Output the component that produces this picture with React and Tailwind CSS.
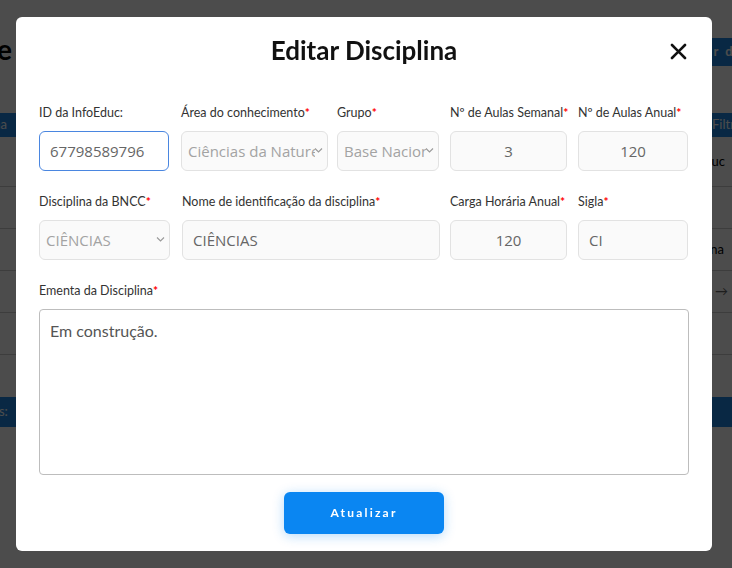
import { useState } from "react";

const fieldBase =
  "h-10 w-full rounded-md border px-[10px] text-[15px] text-[#666] outline-none font-['Open_Sans',sans-serif]";
const fieldIdle = `${fieldBase} border-[#e2e2e2] bg-[#fafafa]`;

const Label = ({ children, required }) => (
  <label className="block h-4 mb-[10px] text-[12.5px] leading-4 text-[#333] whitespace-nowrap">
    {children}
    {required && <span className="text-[#f00] text-[12px] font-bold">*</span>}
  </label>
);

const Select = ({ value }) => (
  <div className="relative">
    <select
      disabled
      value={value}
      onChange={() => {}}
      className={`${fieldIdle} appearance-none pl-[6px] pr-[12px] text-[#a3a3a3]`}
    >
      <option value={value}>{value}</option>
    </select>
    <svg
      className="absolute right-[5px] top-[17px] pointer-events-none"
      width="9"
      height="5"
      viewBox="0 0 9 5"
      fill="none"
      stroke="#999"
      strokeWidth="1.1"
    >
      <path d="M1 0.5l3.5 3.5 3.5-3.5" />
    </svg>
  </div>
);

const Fundo = () => (
  <div className="min-h-screen w-[732px] overflow-hidden bg-white font-['Lato',sans-serif]">
    <div className="flex items-start justify-between pt-[28px]">
      <h1 className="-ml-[19px] text-[28px] font-bold text-black whitespace-nowrap">de Disciplinas</h1>
      <button className="mt-[10px] -mr-[87px] h-[28px] px-5 rounded bg-[#1e88e5] text-white text-[13px] font-bold tracking-[2px] whitespace-nowrap">
        Adicionar disciplina
      </button>
    </div>
    <div className="mt-[43px] h-[24px] bg-[#1e88e5] flex items-center justify-between text-white text-[13px]">
      <span className="-ml-[48px]">Disciplina</span>
      <span className="-mr-[14px]">Filtrar</span>
    </div>
    <div className="text-[13px] text-black">
      <div className="h-[50px] border-b border-[#ccc] flex items-center justify-end">
        <span className="mr-[7px]">InfoEduc</span>
      </div>
      <div className="h-[42px] border-b border-[#ccc]" />
      <div className="h-[42px] border-b border-[#ccc] flex items-center justify-end">
        <span className="mr-[8px]">Disciplina</span>
      </div>
      <div className="h-[42px] border-b border-[#ccc] flex items-center justify-end">
        <span className="mr-[4px] text-[#666]">→</span>
      </div>
      <div className="h-[42px] border-b border-[#ccc]" />
    </div>
    <div className="mt-[42px] h-[30px] bg-[#1e88e5] flex items-center text-white text-[13px]">
      <span className="-ml-[102px] whitespace-nowrap">Total de disciplinas:</span>
    </div>
  </div>
);

export default function App() {
  const [id, setId] = useState("67798589796");
  const [nome, setNome] = useState("CIÊNCIAS");
  const [semanal, setSemanal] = useState("3");
  const [anual, setAnual] = useState("120");
  const [carga, setCarga] = useState("120");
  const [sigla, setSigla] = useState("CI");
  const [ementa, setEmenta] = useState("Em construção.");

  return (
    <div className="relative min-h-screen overflow-hidden font-['Lato',sans-serif]">
      <Fundo />

      {/* Modal */}
      <div className="fixed inset-0 bg-black/70 flex justify-start items-start pt-[17px] pl-[16px]">
        <div className="w-[696px] rounded-md bg-white px-[23px] pb-[17px]">
          <div className="relative h-[66px] flex items-center justify-center">
            <h2 className="text-[26px] font-bold text-[#111] mt-[1px]">Editar Disciplina</h2>
            <button className="absolute right-[2px] top-[26px]" aria-label="Fechar">
              <svg width="17" height="17" viewBox="0 0 17 17" stroke="#111" strokeWidth="2.6" strokeLinecap="round">
                <path d="M2 2l13 13M15 2L2 15" />
              </svg>
            </button>
          </div>

          <div className="pt-[22px]">
            {/* Linha 1 */}
            <div className="flex">
              <div className="w-[130px]">
                <Label>ID da InfoEduc:</Label>
                <input
                  value={id}
                  onChange={(e) => setId(e.target.value)}
                  className={`${fieldBase} bg-white border-[#4a86e0]`}
                />
              </div>
              <div className="w-[147px] ml-[12px]">
                <Label required>Área do conhecimento</Label>
                <Select value="Ciências da Natureza" />
              </div>
              <div className="w-[102px] ml-[9px]">
                <Label required>Grupo</Label>
                <Select value="Base Nacional Comum" />
              </div>
              <div className="w-[117px] ml-[11px]">
                <Label required>Nº de Aulas Semanal</Label>
                <input
                  value={semanal}
                  onChange={(e) => setSemanal(e.target.value)}
                  className={`${fieldIdle} text-center`}
                />
              </div>
              <div className="w-[110px] ml-[11px]">
                <Label required>Nº de Aulas Anual</Label>
                <input
                  value={anual}
                  onChange={(e) => setAnual(e.target.value)}
                  className={`${fieldIdle} text-center`}
                />
              </div>
            </div>

            {/* Linha 2 */}
            <div className="flex mt-[23px]">
              <div className="w-[131px]">
                <Label required>Disciplina da BNCC</Label>
                <Select value="CIÊNCIAS" />
              </div>
              <div className="w-[258px] ml-[12px]">
                <Label required>Nome de identificação da disciplina</Label>
                <input
                  value={nome}
                  onChange={(e) => setNome(e.target.value)}
                  className={fieldIdle}
                />
              </div>
              <div className="w-[117px] ml-[10px]">
                <Label required>Carga Horária Anual</Label>
                <input
                  value={carga}
                  onChange={(e) => setCarga(e.target.value)}
                  className={`${fieldIdle} text-center`}
                />
              </div>
              <div className="w-[110px] ml-[11px]">
                <Label required>Sigla</Label>
                <input
                  value={sigla}
                  onChange={(e) => setSigla(e.target.value)}
                  className={fieldIdle}
                />
              </div>
            </div>

            {/* Ementa */}
            <div className="mt-[23px]">
              <Label required>Ementa da Disciplina</Label>
              <textarea
                value={ementa}
                onChange={(e) => setEmenta(e.target.value)}
                className="block w-full h-[166px] resize-none rounded border border-[#bdbdbd] px-[10px] py-[9px] text-[16px] text-[#555] outline-none"
              />
            </div>

            <div className="flex justify-center mt-[17px]">
              <button className="w-[160px] h-[42px] rounded-md bg-[#0a86f2] text-white text-[12px] font-bold tracking-[2.2px] shadow-[0_2px_12px_rgba(10,134,242,0.3)]">
                Atualizar
              </button>
            </div>
          </div>
        </div>
      </div>
    </div>
  );
}
